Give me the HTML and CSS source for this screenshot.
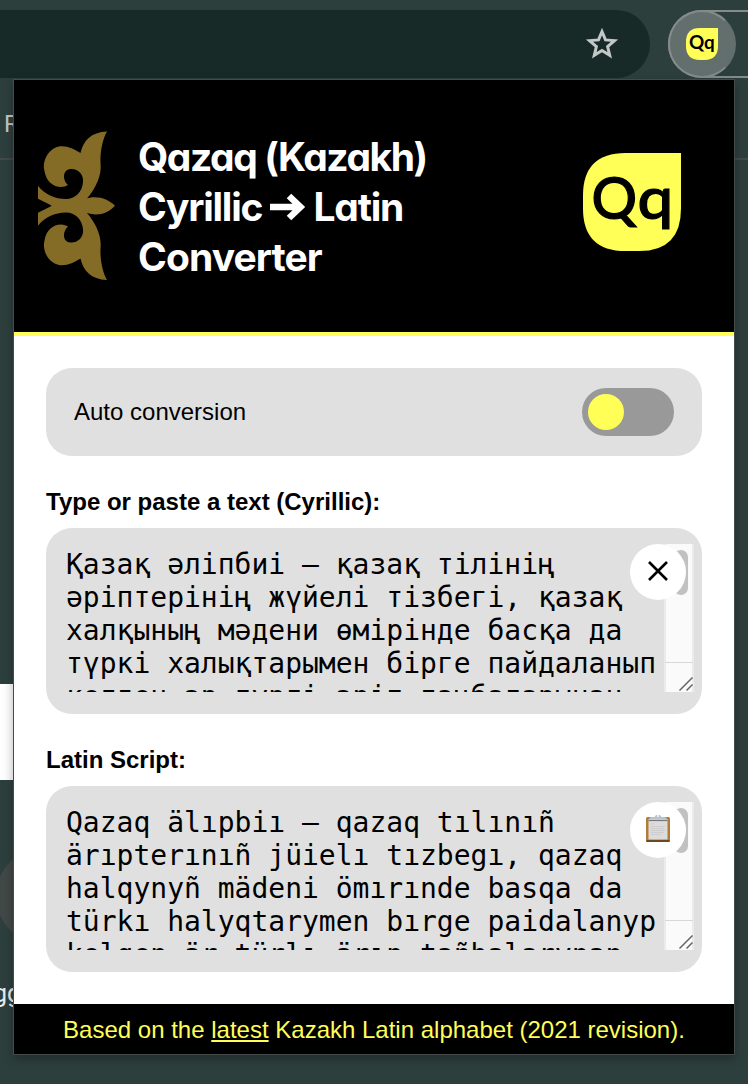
FILE: index.html
```
<!DOCTYPE html>
<html lang="en">
<head>
<meta charset="utf-8">
<title>Qazaq (Kazakh) Cyrillic → Latin Converter</title>
<link rel="stylesheet" href="styles.css">
</head>
<body>
<div class="browser">
  <div class="toolbar">
    <div class="omnibox">
      <svg class="star" viewBox="0 0 34 34"><path d="M17 5.2 L20.3 13.1 L28.8 13.8 L22.3 19.4 L24.3 27.7 L17 23.2 L9.7 27.7 L11.7 19.4 L5.2 13.8 L13.7 13.1 Z"/></svg>
    </div>
    <div class="pill">
      <div class="pill-button">
        <svg class="mini-logo" viewBox="0 0 99 99">
          <path class="tile" d="M99 0V56Q99 99 57 99H43Q0 99 0 56V43Q0 0 43 0Z"/>
          <text class="mini-text" x="9" y="66" textLength="80" lengthAdjust="spacingAndGlyphs">Qq</text>
        </svg>
      </div>
    </div>
  </div>
  <div class="bookmark">R</div>
  <div class="rule"></div>
  <div class="search"></div>
  <div class="shortcut"></div>
  <div class="shortcut-label">gg</div>
</div>

<main class="popup">
  <header class="header">
    <svg class="ornament" viewBox="0 0 77 150">
      <defs>
        <path id="half" d="M69 0.5C53 1 45 10 42.500 22C36 18 29 14.500 21 15.500C10 18 4 30 6.500 40C8 50 15 56 23 56C26 56 28 55 30 54C25 50 24 40 31 38.200C39 36.500 46 43 45 51C44.500 61 37 68 28 68C17 68 6 63 0 54.700V67.800L13.500 74.500V76H52L49 67.500C58 57 64 44 62.500 32C62 20 65 7 69 0.500Z"/>
      </defs>
      <use href="#half"/>
      <use href="#half" transform="translate(0 149.500) scale(1 -1)"/>
      <path d="M46 68C59 64 69 67 77 74.700C69 83 59 86 46 81Z"/>
    </svg>
    <h1 class="title">
      <span class="t1">Qazaq (Kazakh)</span>
      <span class="t2">Cyrillic <svg class="arrow" viewBox="0 0 36 26"><path d="M0 13H30M19 2L30.500 13L19 24"/></svg> Latin</span>
      <span class="t3">Converter</span>
    </h1>
    <svg class="logo" viewBox="0 0 99 99">
      <path class="tile" d="M99 0V56Q99 99 57 99H43Q0 99 0 56V43Q0 0 43 0Z"/>
      <text class="logo-q" x="8.500" y="66.500" textLength="46" lengthAdjust="spacingAndGlyphs">Q</text>
      <text class="logo-q" x="55" y="66.500" textLength="36" lengthAdjust="spacingAndGlyphs">q</text>
    </svg>
  </header>

  <section class="content">
    <div class="auto">
      <span>Auto conversion</span>
      <div class="switch"><div class="knob"></div></div>
    </div>

    <div class="label">Type or paste a text (Cyrillic):</div>
    <div class="box">
      <div class="area">
        <div class="text">Қазақ әліпбиі – қазақ тілінің<br>әріптерінің жүйелі тізбегі, қазақ<br>халқының мәдени өмірінде басқа да<br>түркі халықтарымен бірге пайдаланып<br>келген әр түрлі әріп таңбаларынан</div>
        <div class="scroll"><div class="thumb"></div><svg class="grip" viewBox="0 0 28 29"><path d="M14.500 27.500L27.500 14.500M21.500 27.500L27.500 21.500"/></svg></div>
      </div>
      <div class="round"><svg class="icon" viewBox="0 0 28 28"><path class="cross" d="M5 4L23 22M23 4L5 22"/></svg></div>
    </div>

    <div class="label">Latin Script:</div>
    <div class="box">
      <div class="area">
        <div class="text">Qazaq älıpbiı – qazaq tılınıñ<br>ärıpterınıñ jüielı tızbegı, qazaq<br>halqynyñ mädeni ömırınde basqa da<br>türkı halyqtarymen bırge paidalanyp<br>kelgen är türlı ärıp tañbalarynan</div>
        <div class="scroll"><div class="thumb"></div><svg class="grip" viewBox="0 0 28 29"><path d="M14.500 27.500L27.500 14.500M21.500 27.500L27.500 21.500"/></svg></div>
      </div>
      <div class="round"><svg class="icon" viewBox="0 0 28 28">
        <rect x="2" y="1" width="24" height="25" rx="1.500" fill="#b17c38"/>
        <rect x="2.500" y="24" width="23" height="2" fill="#70481f"/>
        <rect x="4.500" y="3" width="19" height="20.500" fill="#dcdcdc"/>
        <path d="M4.500 4.500H23.500" stroke="#777" stroke-width="1.200"/>
        <path d="M6.500 8H10M6.500 10.500H21M6.500 12.500H20M6.500 14.500H21M6.500 16.500H20M6.500 18.500H17" stroke="#cdcdcd" stroke-width="1"/>
        <path d="M5.500 3.600V1.500Q6 1 8 1H10.500L12 -1H16L17.500 1H20Q22 1 22.500 1.500V3.600Z" fill="#b9c3d0"/>
        <circle cx="14" cy="0" r="1" fill="#fff"/>
      </svg></div>
    </div>
  </section>

  <footer class="footer"><span>Based on the <a>latest</a> Kazakh Latin alphabet (2021 revision).</span></footer>
</main>
</body>
</html>
```
FILE: styles.css
```
* { box-sizing: border-box; }
body {
  margin: 0;
  width: 748px;
  height: 1084px;
  overflow: hidden;
  position: relative;
  padding: 79px 0 0 13px;
  background: #2d3f3d;
  font-family: "Liberation Sans", Arial, sans-serif;
  color: #000;
}
svg { display: block; overflow: visible; }

/* Browser window behind the popup */
.browser { position: absolute; inset: 0; overflow: hidden; }
.toolbar { display: flex; gap: 18px; padding-top: 10px; }
.omnibox {
  flex: none;
  width: 650px;
  height: 68px;
  border-radius: 0 34px 34px 0;
  background: #182a28;
  display: flex;
  align-items: center;
  justify-content: flex-end;
  padding-right: 30px;
}
.star { width: 36px; height: 36px; fill: none; stroke: #c3c8c7; stroke-width: 2.8; }
.pill {
  flex: none;
  width: 140px;
  height: 68px;
  border: 2px solid #848b8a;
  border-radius: 34px;
}
.pill-button {
  width: 68px;
  height: 68px;
  margin: -2px;
  border: 2px solid #848b8a;
  border-right-color: #626f6d;
  border-radius: 34px;
  background: #626f6d;
  display: grid;
  place-items: center;
}
.mini-logo { width: 32px; height: 32px; }
.tile { fill: #ffff57; }
.mini-text { font: 700 60px Lato, sans-serif; }
.bookmark { position: absolute; left: 4px; top: 110px; font: 24px/28px Roboto, sans-serif; color: #c3c8c7; }
.rule { position: absolute; top: 158px; width: 100%; height: 2px; background: #424b48; }
.search { position: absolute; top: 684px; left: 0; width: 40px; height: 96px; background: #fff; }
.shortcut { position: absolute; top: 848px; left: -4px; width: 96px; height: 96px; border-radius: 50%; background: #414845; }
.shortcut-label { position: absolute; top: 979px; left: -7px; font: 25px/30px Roboto, sans-serif; color: #e8eceb; }

/* Extension popup */
.popup {
  position: relative;
  width: 722px;
  height: 976px;
  border: 1px solid #454b49;
  background: #fff;
  box-shadow: 0 4px 10px rgba(0, 0, 0, .3);
  display: flex;
  flex-direction: column;
}
.header {
  height: 256px;
  background: #000;
  border-bottom: 4px solid #ffff57;
  display: flex;
  align-items: center;
  padding: 0 52px 0 24px;
}
.ornament { width: 77px; height: 150px; fill: #846b26; }
.title {
  flex: 1;
  margin: 2px 0 0 23px;
  color: #fff;
  font: 700 39px/50px Inter, Lato, sans-serif;
  font-feature-settings: "cv11" 1, "ss03" 1;
  white-space: nowrap;
}
.title span { display: block; }
.t1 { letter-spacing: -1.45px; }
.t2 { letter-spacing: -1.2px; }
.t3 { letter-spacing: -0.9px; }
.arrow { display: inline-block; width: 36px; height: 26px; margin: 0 -0.5px 0 -0.5px; fill: none; stroke: #fff; stroke-width: 6.5; vertical-align: 1px; }
.logo { width: 98px; height: 98px; margin: -8px 1px 0 0; }
.logo-q { font: 500 58px Lato, sans-serif; stroke: #000; stroke-width: 1.2; }

.content { padding: 32px 32px 0; flex: 1; }
.auto {
  height: 88px;
  border-radius: 26px;
  background: #e0e0e0;
  display: flex;
  align-items: center;
  justify-content: space-between;
  padding: 0 28px;
  font-size: 24px;
}
.switch { width: 92px; height: 48px; border-radius: 24px; background: #999; padding: 6px; }
.knob { width: 36px; height: 36px; border-radius: 50%; background: #ffff57; }
.label { font-weight: 700; font-size: 24px; line-height: 28px; margin-top: 32px; padding-bottom: 12px; }
.box {
  position: relative;
  height: 186px;
  border-radius: 26px;
  background: #e0e0e0;
  padding: 16px 8px 22px 16px;
}
.area { height: 148px; overflow: hidden; display: flex; justify-content: space-between; }
.text { font: 28px/33px "DejaVu Sans Mono", monospace; padding: 4px 0 0 4px; white-space: pre; }
.scroll {
  flex: none;
  width: 30px;
  background: #fafafa;
  border-left: 2px solid #ebebeb;
  border-right: 2px solid #ebebeb;
  display: flex;
  flex-direction: column;
  justify-content: space-between;
}
.thumb { width: 14px; height: 45px; margin: 6px 0 0 8px; border-radius: 7px; background: #c1c1c1; }
.grip { width: 28px; height: 30px; margin-left: -1px; border-top: 1px solid #d8d8d8; fill: none; stroke: #666; stroke-width: 1.5; }
.round {
  position: absolute;
  top: 16px;
  right: 16px;
  width: 56px;
  height: 56px;
  border-radius: 50%;
  background: #fff;
  display: grid;
  place-items: center;
}
.icon { width: 28px; height: 28px; }
.cross { fill: none; stroke: #000; stroke-width: 2.6; }
.footer {
  height: 50px;
  padding-top: 2px;
  background: #000;
  color: #ffff57;
  font-size: 24px;
  display: flex;
  align-items: center;
  justify-content: center;
}
.footer a { text-decoration: underline; }
```
